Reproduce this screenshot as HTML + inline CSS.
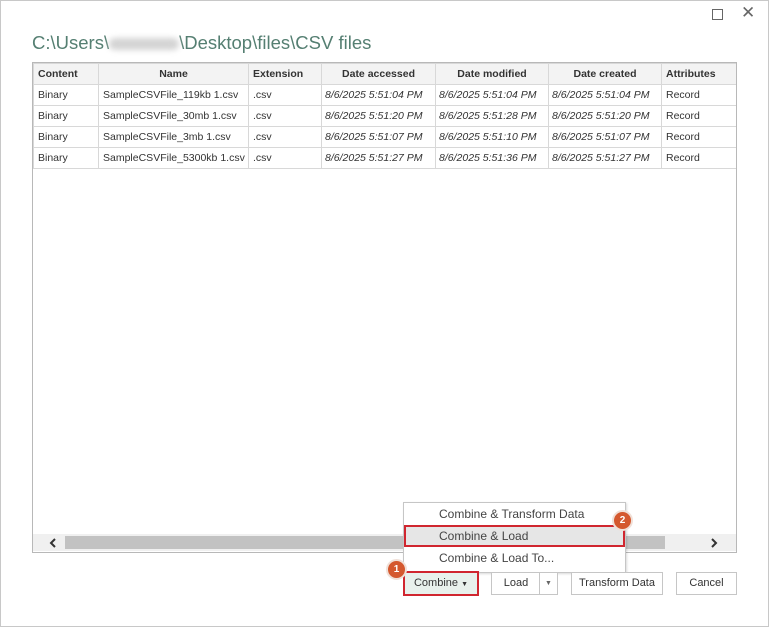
<!DOCTYPE html><html><head><style>
body{margin:0;width:769px;height:627px;background:#fff;font-family:"Liberation Sans",sans-serif;position:relative;overflow:hidden}
.frame{position:absolute;left:0;top:0;width:767px;height:625px;border:1px solid #c8c8c8}
.abs{position:absolute}
.title{left:32px;top:32px;font-size:18.5px;color:#557f72;white-space:nowrap}
.blur{display:inline-block;width:70px;height:12px;background:#d4d4d4;border-radius:6px;filter:blur(3px);vertical-align:middle}
.tbl{left:32px;top:62px;width:703px;height:489px;border:1px solid #b8b8b8;overflow:hidden}
table{border-collapse:collapse;font-size:10.5px;color:#333;table-layout:fixed;width:740px}
td,th{border:1px solid #d8d8d8;height:20px;padding:0 4px;white-space:nowrap;overflow:hidden;text-align:left}
th{background:#f3f3f3;font-weight:bold;text-align:center}
th:first-child{text-align:left}
td.i{font-style:italic;padding:0 3px}
.sb{left:33px;top:534px;width:703px;height:17px;background:#f0f0f0}
.btn{position:absolute;top:572px;height:21px;border:1px solid #c6c6c6;background:#fff;font-size:11px;color:#333;text-align:center;line-height:21px}
.menu{left:403px;top:502px;width:221px;height:69px;border:1px solid #c6c6c6;background:#fff;font-size:12px;color:#444;box-shadow:1px 1px 2px rgba(0,0,0,.15)}
.menu div{height:22px;line-height:22px;padding-left:35px}
.badge{position:absolute;width:17px;height:17px;border-radius:50%;background:#d4582e;color:#fff;font-size:10px;font-weight:bold;text-align:center;line-height:17px;border:2px solid #f0e0d8}
</style></head><body>
<div class="frame"></div>
<div class="abs" style="left:712px;top:9px;width:9px;height:9px;border:1px solid #666"></div>
<div class="abs" style="left:741px;top:3px;font-size:17px;color:#666">✕</div>
<div class="abs title">C:\Users\<span class="blur"></span>\Desktop\files\CSV files</div>
<div class="abs tbl"><table>
<colgroup><col style="width:65px"><col style="width:150px"><col style="width:73px"><col style="width:114px"><col style="width:113px"><col style="width:113px"><col style="width:112px"></colgroup>
<tr><th>Content</th><th>Name</th><th style="text-align:left">Extension</th><th>Date accessed</th><th>Date modified</th><th>Date created</th><th style="text-align:left">Attributes</th></tr>
<tr><td>Binary</td><td>SampleCSVFile_119kb 1.csv</td><td>.csv</td><td class="i">8/6/2025 5:51:04 PM</td><td class="i">8/6/2025 5:51:04 PM</td><td class="i">8/6/2025 5:51:04 PM</td><td>Record</td></tr>
<tr><td>Binary</td><td>SampleCSVFile_30mb 1.csv</td><td>.csv</td><td class="i">8/6/2025 5:51:20 PM</td><td class="i">8/6/2025 5:51:28 PM</td><td class="i">8/6/2025 5:51:20 PM</td><td>Record</td></tr>
<tr><td>Binary</td><td>SampleCSVFile_3mb 1.csv</td><td>.csv</td><td class="i">8/6/2025 5:51:07 PM</td><td class="i">8/6/2025 5:51:10 PM</td><td class="i">8/6/2025 5:51:07 PM</td><td>Record</td></tr>
<tr><td>Binary</td><td>SampleCSVFile_5300kb 1.csv</td><td>.csv</td><td class="i">8/6/2025 5:51:27 PM</td><td class="i">8/6/2025 5:51:36 PM</td><td class="i">8/6/2025 5:51:27 PM</td><td>Record</td></tr>
</table></div>
<div class="abs sb"><div class="abs" style="left:32px;top:2px;width:600px;height:13px;background:#c2c2c2"></div>
<svg class="abs" style="left:16px;top:4px" width="8" height="10"><path d="M6 1L2 5L6 9" stroke="#333" stroke-width="2" fill="none"/></svg>
<svg class="abs" style="left:677px;top:4px" width="8" height="10"><path d="M2 1L6 5L2 9" stroke="#333" stroke-width="2" fill="none"/></svg></div>
<div class="abs menu"><div>Combine &amp; Transform Data</div><div style="background:#e6e6e6;outline:2px solid #d0262f;outline-offset:-2px">Combine &amp; Load</div><div>Combine &amp; Load To...</div></div>
<div class="btn" style="left:403px;width:72px;background:#e8f1ec;border:2px solid #d0262f;top:571px">Combine <span style="font-size:7px">▼</span></div>
<div class="btn" style="left:491px;width:48px">Load</div>
<div class="btn" style="left:539px;width:17px;font-size:7px;color:#666">▼</div>
<div class="btn" style="left:571px;width:90px">Transform Data</div>
<div class="btn" style="left:676px;width:59px">Cancel</div>
<div class="badge" style="left:386px;top:559px">1</div>
<div class="badge" style="left:612px;top:510px">2</div>
</body></html>
